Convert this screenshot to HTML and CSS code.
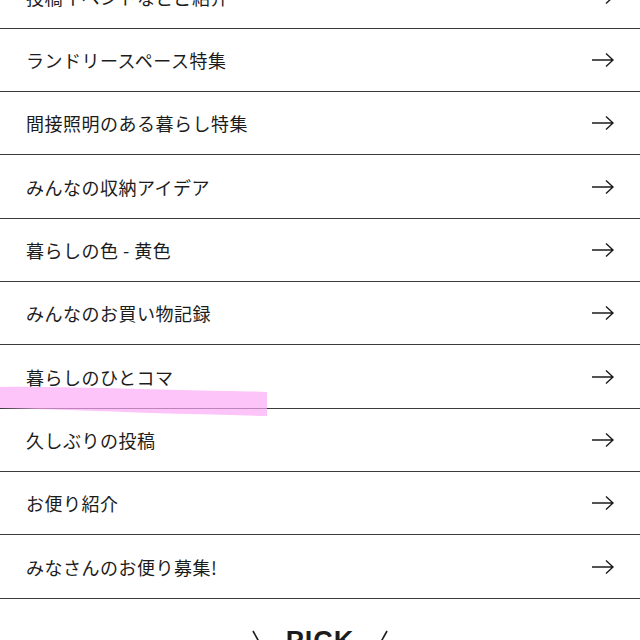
FILE: index.html
```html
<!DOCTYPE html>
<html lang="ja">
<head>
<meta charset="utf-8">
<link rel="stylesheet" href="styles.css">
</head>
<body>
<ul class="list">
  <li class="row"><span class="label">投稿イベントなどご紹介</span><svg class="arrow" viewBox="0 0 24 16"><path d="M1 8H22M15 1.5L22 8L15 14.5"/></svg></li>
  <li class="row"><span class="label">ランドリースペース特集</span><svg class="arrow" viewBox="0 0 24 16"><path d="M1 8H22M15 1.5L22 8L15 14.5"/></svg></li>
  <li class="row"><span class="label">間接照明のある暮らし特集</span><svg class="arrow" viewBox="0 0 24 16"><path d="M1 8H22M15 1.5L22 8L15 14.5"/></svg></li>
  <li class="row"><span class="label">みんなの収納アイデア</span><svg class="arrow" viewBox="0 0 24 16"><path d="M1 8H22M15 1.5L22 8L15 14.5"/></svg></li>
  <li class="row"><span class="label">暮らしの色 - 黄色</span><svg class="arrow" viewBox="0 0 24 16"><path d="M1 8H22M15 1.5L22 8L15 14.5"/></svg></li>
  <li class="row"><span class="label">みんなのお買い物記録</span><svg class="arrow" viewBox="0 0 24 16"><path d="M1 8H22M15 1.5L22 8L15 14.5"/></svg></li>
  <li class="row"><span class="label">暮らしのひとコマ</span><svg class="arrow" viewBox="0 0 24 16"><path d="M1 8H22M15 1.5L22 8L15 14.5"/></svg></li>
  <li class="row"><span class="label">久しぶりの投稿</span><svg class="arrow" viewBox="0 0 24 16"><path d="M1 8H22M15 1.5L22 8L15 14.5"/></svg></li>
  <li class="row"><span class="label">お便り紹介</span><svg class="arrow" viewBox="0 0 24 16"><path d="M1 8H22M15 1.5L22 8L15 14.5"/></svg></li>
  <li class="row"><span class="label">みなさんのお便り募集!</span><svg class="arrow" viewBox="0 0 24 16"><path d="M1 8H22M15 1.5L22 8L15 14.5"/></svg></li>
</ul>
<section class="pick">
  <svg class="slash" viewBox="0 0 12 20"><path d="M1 1L11 19"/></svg>
  <h2 class="pick-title">PICK</h2>
  <svg class="slash" viewBox="0 0 12 20"><path d="M11 1L1 19"/></svg>
</section>
<svg class="marker" viewBox="0 0 268 32" preserveAspectRatio="none"><path d="M0 1C60 0 120 3 180 4C215 5 245 5 267 6L267 30C230 29 190 28 150 27C100 25 50 23 0 22Z"/></svg>
</body>
</html>
```

FILE: styles.css
```css
html, body {
  margin: 0;
  padding: 0;
  background: #ffffff;
}
body {
  position: relative;
  height: 640px;
  overflow: hidden;
  font-family: "Noto Sans CJK JP", "Noto Sans", sans-serif;
  color: #1c1c1c;
}
.list {
  list-style: none;
  margin: -34.5px 0 0 0;
  padding: 0;
}
.row {
  box-sizing: border-box;
  height: 63.33px;
  border-bottom: 1px solid #3a3a3a;
  display: flex;
  align-items: center;
  justify-content: space-between;
  padding: 0 25px 0 26px;
}
.label {
  font-size: 18px;
  letter-spacing: 0.5px;
  line-height: 1;
}
.arrow {
  width: 24px;
  height: 16px;
  fill: none;
  stroke: #1c1c1c;
  stroke-width: 1.4;
}
.pick {
  display: flex;
  justify-content: center;
  align-items: flex-start;
  gap: 22px;
  padding-top: 30px;
}
.pick-title {
  margin: 0;
  font-family: "Liberation Sans", Arial, sans-serif;
  font-weight: 900;
  font-size: 27px;
  letter-spacing: 1px;
  line-height: 1;
  margin-top: -1px;
}
.slash {
  width: 12px;
  height: 20px;
  fill: none;
  stroke: #1c1c1c;
  stroke-width: 1.6;
  margin-top: 1px;
}
.marker {
  position: absolute;
  left: 0;
  top: 386px;
  width: 268px;
  height: 32px;
  fill: rgba(250, 168, 245, 0.68);
}
```
